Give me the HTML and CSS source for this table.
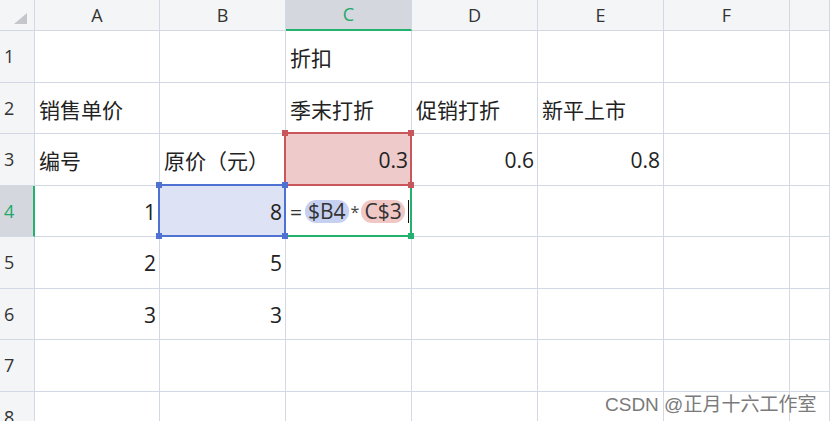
FILE: index.html
```html
<!DOCTYPE html>
<html lang="zh">
<head>
<meta charset="utf-8">
<link rel="stylesheet" href="styles.css">
</head>
<body>
<div class="sheet">
  <div class="hd corner"><svg class="tri" width="13" height="11" viewBox="0 0 13 11"><polygon points="13,0 13,11 0,11" fill="#c3c6cb"/></svg></div>
  <div class="hd col">A</div>
  <div class="hd col">B</div>
  <div class="hd col active">C</div>
  <div class="hd col">D</div>
  <div class="hd col">E</div>
  <div class="hd col">F</div>
  <div class="hd col"></div>

  <div class="hd rowh">1</div>
  <div class="c"></div><div class="c"></div><div class="c">折扣</div><div class="c"></div><div class="c"></div><div class="c"></div><div class="c"></div>

  <div class="hd rowh">2</div>
  <div class="c">销售单价</div><div class="c"></div><div class="c">季末打折</div><div class="c">促销打折</div><div class="c">新平上市</div><div class="c"></div><div class="c"></div>

  <div class="hd rowh">3</div>
  <div class="c">编号</div><div class="c">原价（元）</div>
  <div class="c num ref-red">0.3<span class="frame red"><i class="h tl"></i><i class="h tr"></i><i class="h bl"></i><i class="h br"></i></span></div>
  <div class="c num">0.6</div><div class="c num">0.8</div><div class="c"></div><div class="c"></div>

  <div class="hd rowh active-row">4</div>
  <div class="c num">1</div>
  <div class="c num ref-blue">8<span class="frame blue"><i class="h tl"></i><i class="h tr"></i><i class="h bl"></i><i class="h br"></i></span></div>
  <div class="c edit">
    <span class="eq">=</span><span class="pill pb">$B4</span><span class="op">*</span><span class="pill pr">C$3</span><span class="cursor"></span>
    <span class="frame green"><i class="h br"></i></span>
  </div>
  <div class="c"></div><div class="c"></div><div class="c"></div><div class="c"></div>

  <div class="hd rowh">5</div>
  <div class="c num">2</div><div class="c num">5</div><div class="c"></div><div class="c"></div><div class="c"></div><div class="c"></div><div class="c"></div>

  <div class="hd rowh">6</div>
  <div class="c num">3</div><div class="c num">3</div><div class="c"></div><div class="c"></div><div class="c"></div><div class="c"></div><div class="c"></div>

  <div class="hd rowh">7</div>
  <div class="c"></div><div class="c"></div><div class="c"></div><div class="c"></div><div class="c"></div><div class="c"></div><div class="c"></div>

  <div class="hd rowh">8</div>
  <div class="c"></div><div class="c"></div><div class="c"></div><div class="c"></div><div class="c"></div><div class="c"></div><div class="c"></div>
</div>
<div class="watermark">CSDN @正月十六工作室</div>
</body>
</html>
```

FILE: styles.css
```css
html, body {
  margin: 0;
  padding: 0;
  background: #ffffff;
}
body {
  width: 830px;
  height: 421px;
  overflow: hidden;
  position: relative;
  font-family: "Open Sans", "Noto Sans CJK SC", sans-serif;
  color: #222;
}
.sheet {
  display: grid;
  grid-template-columns: 35px 125px repeat(5, 126px) 1fr;
  grid-template-rows: 31px repeat(8, 51.5px);
  width: 830px;
  height: 421px;
  overflow: hidden;
}
.c, .hd {
  box-sizing: border-box;
  border-right: 1px solid #d3d8e5;
  border-bottom: 1px solid #d3d8e5;
  display: flex;
  align-items: center;
  position: relative;
  white-space: nowrap;
}
.c {
  padding: 2px 3px 0 4px;
  font-size: 21px;
  background: #fff;
}
.num {
  justify-content: flex-end;
  padding-right: 3px;
}
.hd {
  background: #f4f5f7;
  color: #333;
  font-size: 18px;
}
.col {
  justify-content: center;
  padding-bottom: 1px;
}
.rowh {
  padding-left: 4px;
}
.corner {
  justify-content: flex-end;
  align-items: flex-end;
}
.tri {
  margin: 0 7px 6px 0;
}
.col.active {
  background: #d4d7dd;
  color: #22a86a;
  border-bottom: 2px solid #22b26e;
}
.rowh.active-row {
  background: #d4d7dd;
  color: #22a86a;
  border-right: 2px solid #22b26e;
}
.ref-red {
  background: #eecaca;
}
.ref-blue {
  background: #dde3f4;
}
.frame {
  position: absolute;
  left: -2px;
  top: -2px;
  right: -1px;
  bottom: -1px;
  border: 2px solid;
  pointer-events: none;
  z-index: 2;
}
.frame.red { border-color: #c9565b; }
.frame.blue { border-color: #4f72d2; }
.frame.green {
  border-color: transparent #22b26e #22b26e transparent;
  z-index: 1;
}
.h {
  position: absolute;
  width: 6px;
  height: 6px;
}
.red .h { background: #c9565b; }
.blue .h { background: #4f72d2; }
.green .h { background: #22b26e; }
.tl { left: -4px; top: -4px; }
.tr { right: -4px; top: -4px; }
.bl { left: -4px; bottom: -4px; }
.br { right: -4px; bottom: -4px; }
.edit {
  padding-left: 4px;
}
.eq {
  margin-right: 3px;
  color: #333;
}
.pill {
  display: inline-flex;
  align-items: center;
  height: 23px;
  padding: 0 3px;
  border-radius: 11px;
  color: #333;
  line-height: 23px;
}
.pb { background: #c6d1f1; }
.pr { background: #f1c7c5; }
.op {
  font-size: 16px;
  margin: 0 2px;
  color: #444;
}
.cursor {
  width: 1px;
  height: 23px;
  background: #111;
  margin-left: 3px;
}
.watermark {
  position: absolute;
  left: 605px;
  top: 389px;
  font-family: "Liberation Sans", "Noto Sans CJK SC", sans-serif;
  font-size: 19px;
  color: #7a7a7a;
  text-shadow: 0 0 2px #fff, 0 0 2px #fff;
  white-space: nowrap;
}
```
